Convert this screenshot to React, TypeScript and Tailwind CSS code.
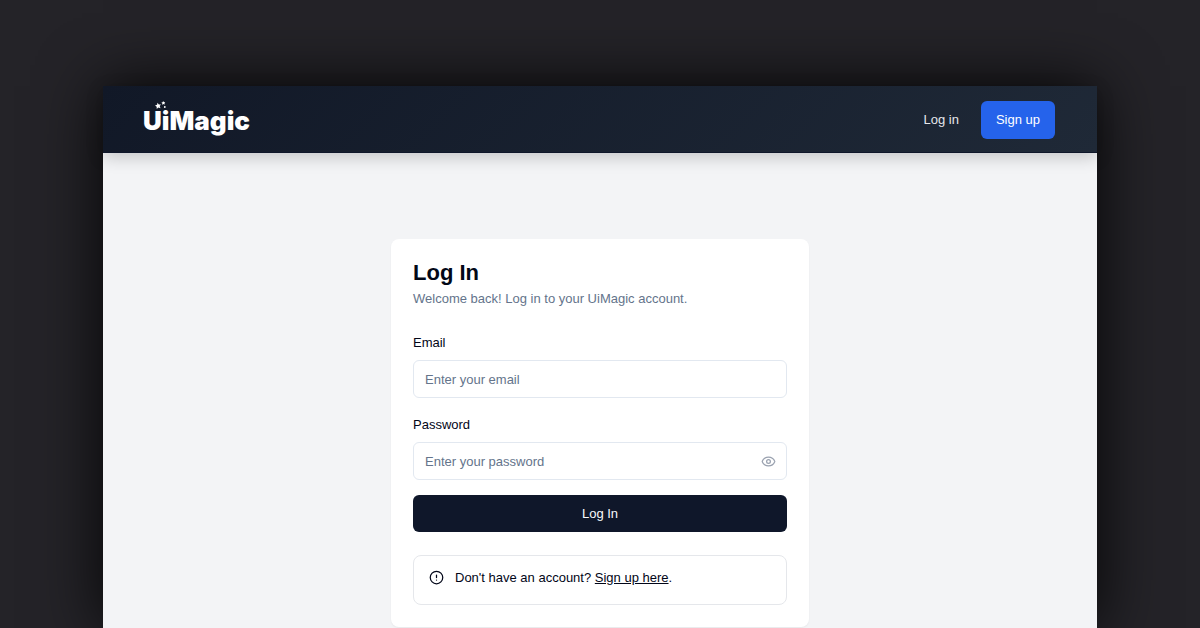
import { useState } from "react";
import { CircleAlert, Eye } from "lucide-react";

const inputClass =
  "block h-[38px] w-full rounded-md border border-slate-200 bg-white pl-[11px] pr-10 text-[13px] text-slate-950 placeholder:text-[#64748b] focus:outline-2 focus:outline-slate-400";

function Logo() {
  return (
    <a href="#home" className="relative mt-0.5 block font-['Inter',sans-serif] text-[26px] leading-8 font-black text-white">
      UiMagic
      <svg className="absolute -top-1 left-3 h-3 w-3" viewBox="0 0 12 12" fill="currentColor" aria-hidden="true">
        <path d="M2.5 1.8 3.8 3.6 6 3.4 4.7 5.1 5.5 7.2 3.4 6.5 1.7 7.9 1.7 5.7 0 4.4 2.1 3.8Z" />
        <path d="m8.1 0 .7 1.1 1.4-.1-.8 1.1.5 1.3-1.4-.4-1.1.9v-1.4L6.3 1.7l1.3-.4Z" />
        <circle cx="9.8" cy="6" r=".9" />
      </svg>
    </a>
  );
}

function Header() {
  return (
    <header className="relative flex h-[67px] items-center justify-between border-b border-[#0f172a] bg-linear-135 from-[#111827] to-[#1f2937] pt-0.5 pr-[42px] pl-10 shadow-[0_4px_16px_#00000033]">
      <Logo />
      <nav className="flex items-center gap-[22px] text-[13px]">
        <a href="#login" className="text-gray-200">Log in</a>
        <a href="#signup" className="flex h-[38px] items-center rounded-md bg-[#2563eb] px-[15px] text-white">Sign up</a>
      </nav>
    </header>
  );
}

function LoginCard() {
  const [visible, setVisible] = useState(false);
  return (
    <section className="w-full max-w-[418px] rounded-lg bg-white px-[22px] pt-[22px] pb-[22px] shadow-xs">
      <h1 className="text-[22px] leading-6 font-bold text-[#020817]">Log In</h1>
      <p className="mt-1 text-[13px] leading-5 text-[#64748b]">Welcome back! Log in to your UiMagic account.</p>
      <form className="mt-[26px]" onSubmit={(event) => event.preventDefault()}>
        <label htmlFor="email" className="mb-[9px] block text-[13px] leading-4 text-slate-950">Email</label>
        <input id="email" type="email" placeholder="Enter your email" className={inputClass} />
        <label htmlFor="password" className="mt-[19px] mb-[9px] block text-[13px] leading-4 text-slate-950">Password</label>
        <div className="relative">
          <input id="password" type={visible ? "text" : "password"} placeholder="Enter your password" className={inputClass} />
          <button
            type="button"
            aria-label="Show password"
            onClick={() => setVisible(!visible)}
            className="absolute inset-y-0 right-[11px] flex items-center text-gray-400"
          >
            <Eye size={15} />
          </button>
        </div>
        <button type="submit" className="mt-[15px] h-[37px] w-full rounded-md bg-[#0f172a] text-[13px] text-slate-50">Log In</button>
      </form>
      <div className="mt-[23px] flex h-[50px] items-start gap-[11px] rounded-lg border border-gray-200 px-[15px] pt-[14px] text-slate-950">
        <CircleAlert size={15} className="shrink-0" />
        <p className="text-[13px] leading-4">
          Don't have an account? <a href="#signup" className="underline">Sign up here</a>.
        </p>
      </div>
    </section>
  );
}

export default function App() {
  return (
    <div className="flex min-h-screen flex-col overflow-hidden bg-[#242328] px-[103px] pt-[86px] font-['Liberation_Sans',Arial,sans-serif]">
      <div className="flex flex-1 flex-col bg-gray-100 shadow-[0_0_60px_#000000e0]">
        <Header />
        <main className="flex flex-1 items-start justify-center px-6 pt-[86px]">
          <LoginCard />
        </main>
      </div>
    </div>
  );
}
